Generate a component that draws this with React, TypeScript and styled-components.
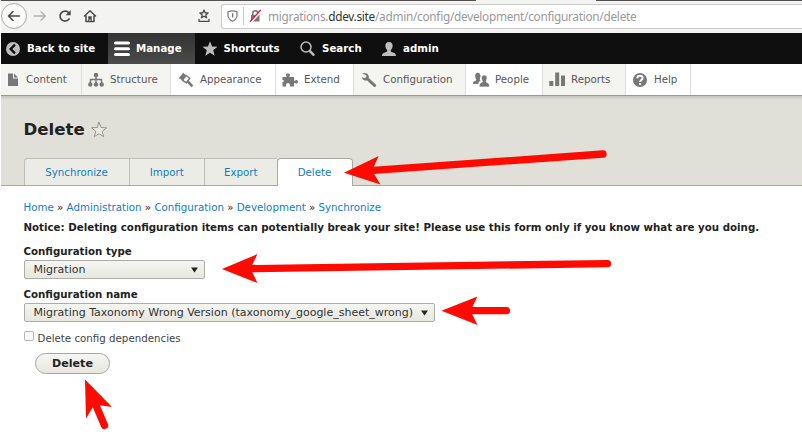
import React from 'react';
import styled, { createGlobalStyle } from 'styled-components';

const Global = createGlobalStyle`
  * { box-sizing: border-box; }
  body { margin: 0; background: #fff; overflow: hidden; }
  h1, p { margin: 0; }
`;

const Page = styled.div`
  position: relative;
  width: 802px;
  height: 434px;
  padding-left: 1px;
  overflow: hidden;
  background: #fff;
  color: #222;
  font: 10.26px 'DejaVu Sans', sans-serif;
`;

const BrowserBar = styled.div`
  display: flex;
  align-items: center;
  height: 33px;
  padding-bottom: 1px;
  background: linear-gradient(90deg, #545052 475px, #f3f3f1 475px 595px, #545052 595px) top / 100% 1px no-repeat, #f3f3f1;
`;

const NavButton = styled.div<{ $gap: number; $round?: boolean }>`
  display: grid;
  place-items: center;
  flex: none;
  width: ${p => (p.$round ? 26 : 16)}px;
  height: ${p => (p.$round ? 26 : 16)}px;
  margin-left: ${p => p.$gap}px;
  border: ${p => (p.$round ? '1px solid #aaa' : '0')};
  border-radius: ${p => (p.$round ? '50%' : '0')};
  background: ${p => (p.$round ? '#fbfbfa' : 'none')};
`;

const UrlBox = styled.div`
  display: flex;
  align-items: center;
  flex: 1;
  height: 25px;
  margin-left: 9px;
  padding-left: 5px;
  border: 1px solid #ccc;
  border-right: 0;
  border-radius: 3px 0 0 3px;
  background: #fff;
`;

const Divider = styled.div`
  width: 1px;
  height: 18px;
  margin: 0 4px 0 5px;
  background: #ccc;
`;

const Url = styled.div`
  margin-left: 6px;
  color: #999;
  font: 11.8px 'Noto Sans', sans-serif;
  white-space: nowrap;
  letter-spacing: -0.27px;
  b { color: #333; font-weight: 400; }
`;

const AdminBar = styled.nav`
  display: flex;
  height: 31px;
  background: #0f0f0f;
  color: #fff;
  font-weight: 700;
`;

const AdminItem = styled.div<{ $width: number; $active?: boolean; $pad?: number }>`
  display: flex;
  align-items: center;
  flex: none;
  gap: 6px;
  width: ${p => p.$width}px;
  padding-left: ${p => p.$pad ?? 4}px;
  white-space: nowrap;
  background: ${p => (p.$active ? 'linear-gradient(#333, #4b4b4b)' : 'none')};
`;

const Label = styled.span`
  padding-bottom: 2px;
`;

const Tray = styled.nav`
  display: flex;
  height: 32px;
  border-bottom: 1px solid #9b9b96;
  background: #fff;
  color: #565656;
`;

const TrayItem = styled.div<{ $width: number; $tint?: boolean; $pad?: number }>`
  display: flex;
  align-items: center;
  flex: none;
  gap: 6px;
  width: ${p => p.$width}px;
  padding-left: ${p => p.$pad ?? 6}px;
  border-right: 1px solid #ddd;
  background: ${p => (p.$tint ? '#f4f4f0' : '#fff')};
`;

const Header = styled.header`
  height: 90px;
  padding: 25px 0 0 22.5px;
  border-bottom: 1px solid #a9a9a3;
  background: linear-gradient(#c5c5be, #e0dfd8 4px);
`;

const TitleRow = styled.div`
  display: flex;
  align-items: center;
  gap: 6px;
  height: 18px;
`;

const Title = styled.h1`
  font-size: 16.6px;
  line-height: 18px;
`;

const Tabs = styled.div`
  display: flex;
  height: 28px;
  margin-top: 19px;
`;

const Tab = styled.div<{ $width: number; $active?: boolean }>`
  display: flex;
  justify-content: center;
  width: ${p => p.$width}px;
  height: ${p => (p.$active ? 28 : 27)}px;
  line-height: 26px;
  border: 1px solid ${p => (p.$active ? '#a9a9a3' : '#bfbfba')};
  border-right-width: ${p => (p.$active ? 1 : 0)}px;
  border-bottom: 0;
  border-radius: ${p => (p.$active ? '4px 4px 0 0' : '0')};
  background: ${p => (p.$active ? '#fff' : '#ecece7')};
  color: #0f7cc3;
  &:first-child { border-top-left-radius: 4px; }
`;

const Content = styled.main`
  padding: 13px 0 0 22.5px;
`;

const Breadcrumb = styled.div`
  height: 16px;
  line-height: 16px;
  white-space: nowrap;
  a { color: #0f7cc3; }
`;

const Strong = styled.div<{ $top: number }>`
  height: 14px;
  margin-top: ${p => p.$top}px;
  line-height: 14px;
  font-weight: 700;
  white-space: nowrap;
`;

const Select = styled.div<{ $width: number }>`
  display: flex;
  align-items: center;
  justify-content: space-between;
  width: ${p => p.$width}px;
  height: 19px;
  margin-top: 2px;
  padding: 0 6px 0 9px;
  border: 1px solid #adada8;
  border-radius: 2px;
  background: linear-gradient(#f5f5f2, #e7e7df);
  color: #333;
  font-size: 11.03px;
  white-space: nowrap;
`;

const CheckRow = styled.div`
  display: flex;
  align-items: flex-start;
  gap: 4px;
  height: 16px;
  margin-top: 9px;
  color: #444;
  line-height: 14px;
`;

const Checkbox = styled.span`
  width: 10px;
  height: 10px;
  border: 1px solid #b5b5b5;
  border-radius: 2px;
  background: #fafafa;
`;

const Submit = styled.button`
  display: block;
  width: 75px;
  height: 21px;
  margin: 6px 0 0 11.5px;
  padding: 0;
  border: 1px solid #a6a6a6;
  border-radius: 11px;
  background: linear-gradient(#f6f6f3, #e7e7df);
  color: #222;
  font: 700 11.1px/18px 'DejaVu Sans', sans-serif;
`;

const Overlay = styled.svg`
  position: absolute;
  inset: 0;
  pointer-events: none;
`;

const Glyph = styled.svg`
  display: block;
  flex: none;
  overflow: visible;
`;

const Icon = ({ children, color = '#777' }: { children: React.ReactNode; color?: string }) => (
  <Glyph width="16" height="16" viewBox="0 0 16 16" fill={color}>{children}</Glyph>
);

const STAR = 'M8 .3l2 5.200 5.500.3-4.300 3.500 1.500 5.400L8 11.700l-4.700 3L4.800 9.300.5 5.800l5.500-.3z';

const line = (width = 1.6, color = '#4a4a4a') => ({
  fill: 'none', stroke: color, strokeWidth: width,
  strokeLinecap: 'round' as const, strokeLinejoin: 'round' as const,
});

export default function App() {
  return (
    <>
      <Global />
      <Page>
        <BrowserBar>
          <NavButton $gap={0} $round><Icon><path {...line()} d="M13.5 8H2.8M7 3.5L2.5 8 7 12.5" /></Icon></NavButton>
          <NavButton $gap={4}><Icon><path {...line(1.3, '#b0b0b0')} d="M3 8h11M10 3.7L14.3 8 10 12.3" /></Icon></NavButton>
          <NavButton $gap={10}>
            <Icon><path {...line(1.7)} d="M12.1 11A5 5 0 1 1 11.8 4.7" /><path fill="#4a4a4a" d="M13.7 2.1v5.2H8.6z" /></Icon>
          </NavButton>
          <NavButton $gap={9}>
            <Icon><path {...line(1.5)} d="M2.5 8L8 2.7 13.5 8M4 7.5v6h8v-6" /><path fill="#4a4a4a" d="M6.3 8.2h3.4v5.3H8.6v-2H7.4v2H6.3z" /></Icon>
          </NavButton>
          <NavButton $gap={98}>
            <Icon><path {...line(1.3)} d="M8 2l1.1 2.8 3 .2-2.3 1.9.8 2.9L8 8.2 5.4 9.8l.8-2.9L3.9 5l3-.2zM3 11.3v2h10v-2" /></Icon>
          </NavButton>
          <UrlBox>
            <Glyph width="11" height="12" viewBox="0 0 11 12">
              <path {...line(1.2, '#777')} d="M1 1.8Q5.5 0 10 1.8V6Q9.5 9.5 5.5 11.2 1.5 9.5 1 6z" /><path fill="#777" d="M5 3.3h1.3v4.3H5z" />
            </Glyph>
            <Divider />
            <Glyph width="14" height="14" viewBox="0 0 14 14">
              <path fill="#777" d="M3 6h8.5v6.5H3z" /><path {...line(1.6, '#777')} d="M4.8 6V4.2a2.5 2.5 0 0 1 5 0V6" />
              <path d="M2.8 13.5L13.3 2" stroke="#fff" strokeWidth="2" /><path d="M2 12.7L12.7 1" stroke="#f0144f" strokeWidth="1.4" />
            </Glyph>
            <Url>migrations.<b>ddev.site</b>/admin/config/development/configuration/delete</Url>
          </UrlBox>
        </BrowserBar>

        <AdminBar>
          <AdminItem $width={107}>
            <Icon color="#bebebe"><circle cx="8" cy="8" r="7" /><path {...line(2.4, '#0f0f0f')} strokeLinecap="butt" strokeLinejoin="miter" d="M10 3.7L5.7 8 10 12.3" /></Icon><Label>Back to site</Label>
          </AdminItem>
          <AdminItem $width={87} $active $pad={6}>
            <Icon color="#fff"><rect y="0.5" width="16" height="3" rx="1.5" /><rect y="6.2" width="16" height="3" rx="1.5" /><rect y="11.9" width="16" height="3" rx="1.5" /></Icon><Label>Manage</Label>
          </AdminItem>
          <AdminItem $width={100} $pad={6.5}><Icon color="#bebebe"><path d={STAR} /></Icon><Label>Shortcuts</Label></AdminItem>
          <AdminItem $width={82} $pad={5}>
            <Icon color="#bebebe"><circle {...line(1.5, '#bebebe')} cx="6" cy="6" r="5" /><path {...line(2.6, '#bebebe')} d="M10.2 10.3l3.2 3.4" /></Icon><Label>Search</Label>
          </AdminItem>
          <AdminItem $width={90}>
            <Icon color="#bebebe"><path d="M8 1c2.6 0 3.9 1.8 3.6 4.3C11.4 7 10.8 8.2 9.9 9c-.4 1 .1 1.9 1.5 2.3 2 .6 3.4 1.1 3.6 3.7H1c.2-2.6 1.6-3.1 3.6-3.7C6 10.9 6.5 10 6.1 9 5.2 8.2 4.6 7 4.4 5.3 4.1 2.8 5.4 1 8 1z" /></Icon><Label>admin</Label>
          </AdminItem>
        </AdminBar>

        <Tray>
          <TrayItem $width={81} $tint $pad={3}><Icon><path d="M4 1.5h5v5h5V14H4z" /><path d="M10 1.5L14 5.5h-4z" /></Icon><Label>Content</Label></TrayItem>
          <TrayItem $width={89} $tint>
            <Icon><path {...line(1.5, '#777')} d="M2.5 12V7.5h11V12M8 3v9" /><circle cx="8" cy="3" r="2.3" /><circle cx="2.3" cy="12.5" r="2.2" /><circle cx="8" cy="12.5" r="2.2" /><circle cx="13.7" cy="12.5" r="2.2" /></Icon><Label>Structure</Label>
          </TrayItem>
          <TrayItem $width={105} $pad={7}>
            <Icon><path d="M5.2.8L.7 6.5l1.8.4 2.3 2L8.6 3.7z" /><path {...line(1.4, '#777')} strokeLinejoin="miter" d="M8.2 3.5l3.5 2.8L8.3 10.7 4.5 8.3" /><path {...line(2.6, '#777')} strokeLinecap="butt" d="M9.6 9.3l4.8 5" /></Icon><Label>Appearance</Label>
          </TrayItem>
          <TrayItem $width={78}>
            <Icon><path d="M.5 5H4.5C5.2 4.2 3.3 3.5 4 2.3 4.6 1.1 7.4 1.1 8 2.3c.7 1.2-1.2 1.9-.5 2.7H12v3.6c1 .8 1.4-1 2.8-.6 1.6.5 1.6 3.1 0 3.6-1.4.4-1.8-1.4-2.8-.5V14.5H8v-2c-.4-1.6-3.6-1.6-4 0v2H.5V10c1.8.5 2-2.5 0-2z" /></Icon><Label>Extend</Label>
          </TrayItem>
          <TrayItem $width={112} $tint $pad={7}>
            <Icon><path d="M1 1.5C3 .5 6.2.6 7.5 3.4c.5 1 .3 2 .5 2.9l7 6.5c1 1.4-.9 3-2.2 1.9L6.2 8.5C4 8.8 1.3 8.2.8 5l2.5 1.3L5.5 5 5 3z" /></Icon><Label>Configuration</Label>
          </TrayItem>
          <TrayItem $width={77} $pad={7}>
            <Icon><path d="M4.7.8c2.5 0 3.4 2.6 2.4 5.2-.4 1.6-.6 2 .7 2.6-1.6.8-2.3 1.7-2.4 3.3H0C0 9.8.8 9.3 2.3 8.8c1.3-.5 1-1.2.5-2.3C1.7 4 2 .8 4.7.8z" /><path d="M11.2 3c2.6 0 3.5 2.7 2.4 5.2-.5 1.3-.7 1.9.5 2.3 1.4.5 2.4 1 2.4 4.5H6.2c0-3.5.8-4 2.3-4.5 1.2-.4 1-1 .4-2.3C7.9 5.7 8.6 3 11.2 3z" stroke="#fff" strokeWidth=".7" /></Icon><Label>People</Label>
          </TrayItem>
          <TrayItem $width={83} $tint><Icon><path d="M.3 9h4v5h-4zM6.2.5h4V14h-4zM12 3.5h4V14h-4z" /></Icon><Label>Reports</Label></TrayItem>
          <TrayItem $width={65}>
            <Icon><circle cx="8" cy="8" r="7" /><path {...line(2, '#fff')} strokeLinecap="butt" d="M5.3 6.2c.1-3.3 5.3-3.1 5.3-.2 0 2-2.4 1.7-2.4 4" /><path fill="#fff" d="M7.2 11h2v1.9h-2z" /></Icon><Label>Help</Label>
          </TrayItem>
        </Tray>

        <Header>
          <TitleRow>
            <Title>Delete</Title>
            <Glyph width="16" height="16" viewBox="0 0 16 16"><path d={STAR} {...line(0.9, '#8d8d78')} fill="#e9e9e3" /></Glyph>
          </TitleRow>
          <Tabs>
            <Tab $width={105}>Synchronize</Tab>
            <Tab $width={75.5}>Import</Tab>
            <Tab $width={72.5}>Export</Tab>
            <Tab $width={76} $active>Delete</Tab>
          </Tabs>
        </Header>

        <Content>
          <Breadcrumb>
            <a>Home</a> » <a>Administration</a> » <a>Configuration</a> » <a>Development</a> » <a>Synchronize</a>
          </Breadcrumb>
          <Strong $top={5}>Notice: Deleting configuration items can potentially break your site! Please use this form only if you know what are you doing.</Strong>
          <Strong $top={10}>Configuration type</Strong>
          <Select $width={181.5}>Migration<Glyph width="7" height="6"><path d="M0 .5h7L3.5 5.5z" fill="#222" /></Glyph></Select>
          <Strong $top={8}>Configuration name</Strong>
          <Select $width={411.5}>Migrating Taxonomy Wrong Version (taxonomy_google_sheet_wrong)<Glyph width="7" height="6"><path d="M0 .5h7L3.5 5.5z" fill="#222" /></Glyph></Select>
          <CheckRow><Checkbox />Delete config dependencies</CheckRow>
          <Submit>Delete</Submit>
        </Content>

        <Overlay width="802" height="434" viewBox="0 0 802 434" fill="#ff0a00" stroke="#ff0a00" strokeWidth="7.3" strokeLinecap="round">
          <path d="M370 170.7L603 154M250 268.6L607.5 263.6M468 310.7H506.5M95 403L104.500 425.500" />
          <g stroke="none">
            <path d="M344 172.7L378.7 156 372 170.5 380.5 184.5z" />
            <path d="M222 269L257.5 254 250.5 268.5 257.5 283z" />
            <path d="M441.5 310.7L477.5 296.5 470.5 310.7 477.5 325z" />
            <path d="M85 379.5L112 407 94.5 404.5 86 418.5z" />
          </g>
        </Overlay>
      </Page>
    </>
  );
}
